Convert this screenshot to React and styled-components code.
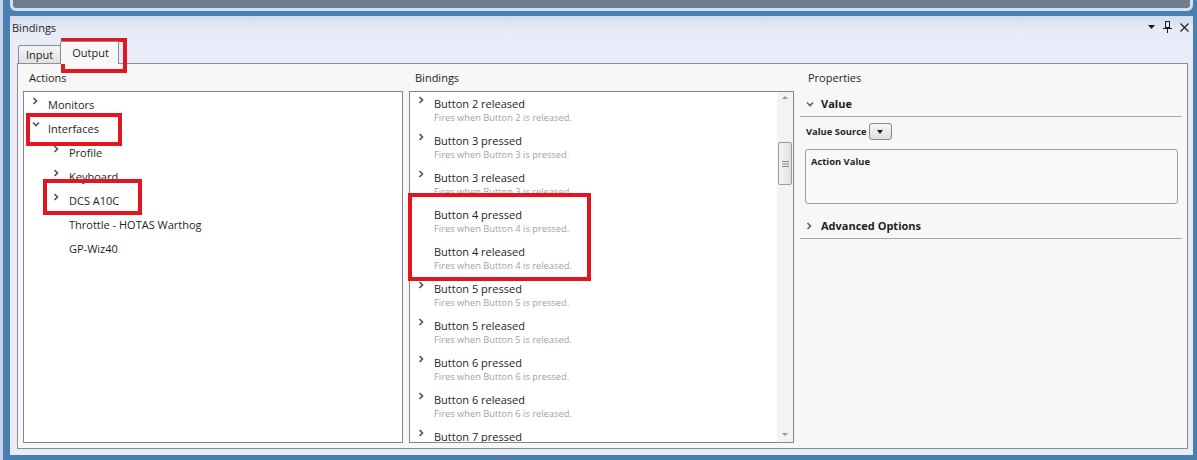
import React from 'react'
import styled, { createGlobalStyle } from 'styled-components'

const GlobalStyle = createGlobalStyle`
  html, body {
    margin: 0;
    padding: 0;
    background: #4a7fb2;
  }
  body {
    font-family: 'Open Sans', 'Liberation Sans', sans-serif;
    font-size: 11px;
    color: #1e1e1e;
  }
`;

const Frame = styled.div`
  position: relative;
  width: 1197px;
  height: 460px;
  box-sizing: border-box;
  display: flex;
  flex-direction: column;
  border-left: 3px solid #c6d3e4;
  padding: 0 4px 5px 7px;
  overflow: hidden;
`;

const TopWell = styled.div`
  height: 11px;
  margin-bottom: 5px;
  flex: none;
  box-sizing: border-box;
  background: #6e7e90;
  border: 3px solid #d4e0f0;
  border-top: none;
  border-radius: 0 0 6px 6px;
`;

const Panel = styled.div`
  flex: 1;
  display: flex;
  flex-direction: column;
  background: #e9ecf8;
  min-height: 0;
`;

const PanelHeader = styled.div`
  height: 22px;
  flex: none;
  display: flex;
  align-items: center;
  padding: 0 4px 0 2px;
  background: linear-gradient(#d3dcec, #e6eaf7 60%, #e9ecf8);
`;

const PanelTitle = styled.div`
  flex: 1;
`;

const HeaderIcons = styled.div`
  display: flex;
  align-items: center;
  gap: 8px;
`;

const TabArea = styled.div`
  flex: 1;
  display: flex;
  flex-direction: column;
  padding: 4px 5px 6px 7px;
  min-height: 0;
`;

const TabRow = styled.div`
  display: flex;
  align-items: flex-end;
  height: 22px;
  padding-left: 1px;
  flex: none;
`;

const Tab = styled.div`
  box-sizing: border-box;
  height: ${p => (p.active ? '23px' : '19px')};
  padding: ${p => (p.active ? '3px 9px 0 11px' : '1px 7px 0 7px')};
  border: 1px solid #8c8e94;
  border-bottom: ${p => (p.active ? 'none' : '1px solid #8c8e94')};
  border-radius: 2px 2px 0 0;
  background: ${p => (p.active ? '#f7f7f7' : 'linear-gradient(#f3f3f3, #e2e2e2)')};
  margin-left: ${p => (p.active ? '-1px' : '0')};
  position: relative;
  z-index: ${p => (p.active ? 2 : 1)};
  line-height: 15px;
`;

const TabBody = styled.div`
  flex: 1;
  margin-top: -1px;
  border: 1px solid #8c8e94;
  background: #f7f7f7;
  padding: 0 5px 5px 5px;
  display: grid;
  grid-template-columns: 380px 385px 1fr;
  column-gap: 6px;
  min-height: 0;
`;

const Column = styled.div`
  display: flex;
  flex-direction: column;
  min-height: 0;
`;

const ColumnHeader = styled.div`
  height: 27px;
  flex: none;
  box-sizing: border-box;
  padding: 6px 0 0 ${p => p.indent || 6}px;
  line-height: 16px;
`;

const ListBox = styled.div`
  flex: 1;
  display: flex;
  border: 1px solid #828790;
  background: #ffffff;
  overflow: hidden;
  min-height: 0;
`;

const ListItems = styled.div`
  flex: 1;
  overflow: hidden;
`;

const TreeRow = styled.div`
  height: 24px;
  display: flex;
  align-items: center;
  padding-left: ${p => 8 + p.level * 21}px;
`;

const ChevronSlot = styled.span`
  width: 16px;
  height: 14px;
  flex: none;
  display: flex;
  align-items: flex-start;
  justify-content: flex-start;
`;

const BindingItem = styled.div`
  height: 37px;
  box-sizing: border-box;
  padding: 4px 0 0 8px;
  display: flex;
`;

const BindingText = styled.div`
  display: flex;
  flex-direction: column;
`;

const BindingTitle = styled.div`
  line-height: 15px;
`;

const BindingDesc = styled.div`
  font-size: 9.3px;
  line-height: 13px;
  color: #a2a2a2;
`;

const ScrollTrack = styled.div`
  width: 16px;
  flex: none;
  background: #f3f3f3;
  display: flex;
  flex-direction: column;
  align-items: center;
  padding-top: 4px;
  box-sizing: border-box;
`;

const ScrollThumb = styled.div`
  width: 14px;
  height: 43px;
  margin-top: 43px;
  box-sizing: border-box;
  border: 1px solid #9b9b9b;
  border-radius: 2px;
  background: linear-gradient(90deg, #f4f4f4, #e2e2e2);
  display: flex;
  align-items: center;
  justify-content: center;
`;

const Spacer = styled.div`
  flex: 1;
`;

const ScrollDown = styled.div`
  margin-bottom: 6px;
  display: flex;
`;

const SectionHeader = styled.div`
  height: 26px;
  box-sizing: border-box;
  display: flex;
  align-items: center;
  padding-left: 6px;
  border-bottom: 1px solid #a9a9a9;
  font-weight: 700;
  margin-top: ${p => p.gap || 0}px;
`;

const SectionChevron = styled.span`
  width: 15px;
  display: flex;
  align-items: center;
`;

const FieldRow = styled.div`
  display: flex;
  align-items: center;
  margin-top: 6px;
  padding-left: 6px;
  height: 17px;
`;

const FieldLabel = styled.span`
  font-size: 9.4px;
  font-weight: 700;
  margin-right: 2px;
`;

const DropButton = styled.div`
  width: 23px;
  height: 17px;
  box-sizing: border-box;
  border: 1px solid #8a8a8a;
  border-radius: 3px;
  background: linear-gradient(#f6f6f6, #dedede);
  display: flex;
  align-items: center;
  justify-content: center;
`;

const ValueBox = styled.div`
  margin: 9px 4px 0 5px;
  height: 55px;
  box-sizing: border-box;
  border: 1px solid #9c9c9c;
  border-radius: 3px;
  padding: 5px 5px;
  font-size: 9.4px;
  font-weight: 700;
  background: #f8f8f8;
`;

const Highlight = styled.div`
  position: absolute;
  box-sizing: border-box;
  border: 4px solid #e3161f;
  pointer-events: none;
`;

const Chevron = ({ open, color = '#505050' }) =>
  open ? (
    <svg width="8" height="6" viewBox="0 0 8 6">
      <path d="M1 1.5 L4 4.5 L7 1.5" fill="none" stroke={color} strokeWidth="1.6" />
    </svg>
  ) : (
    <svg width="6" height="8" viewBox="0 0 6 8">
      <path d="M1.5 1 L4.5 4 L1.5 7" fill="none" stroke={color} strokeWidth="1.6" />
    </svg>
  );

const Triangle = ({ up, color = '#1a1a1a', w = 7, h = 4 }) => (
  <svg width={w} height={h} viewBox={`0 0 ${w} ${h}`}>
    <path d={up ? `M0 ${h} L${w / 2} 0 L${w} ${h} Z` : `M0 0 L${w} 0 L${w / 2} ${h} Z`} fill={color} />
  </svg>
);

const actions = [
  { label: 'Monitors', level: 0, chevron: 'closed' },
  { label: 'Interfaces', level: 0, chevron: 'open' },
  { label: 'Profile', level: 1, chevron: 'closed' },
  { label: 'Keyboard', level: 1, chevron: 'closed' },
  { label: 'DCS A10C', level: 1, chevron: 'closed' },
  { label: 'Throttle - HOTAS Warthog', level: 1 },
  { label: 'GP-Wiz40', level: 1 },
];

const bindings = [
  ['Button 2 released', 'Fires when Button 2 is released.', true],
  ['Button 3 pressed', 'Fires when Button 3 is pressed.', true],
  ['Button 3 released', 'Fires when Button 3 is released.', true],
  ['Button 4 pressed', 'Fires when Button 4 is pressed.', false],
  ['Button 4 released', 'Fires when Button 4 is released.', false],
  ['Button 5 pressed', 'Fires when Button 5 is pressed.', true],
  ['Button 5 released', 'Fires when Button 5 is released.', true],
  ['Button 6 pressed', 'Fires when Button 6 is pressed.', true],
  ['Button 6 released', 'Fires when Button 6 is released.', true],
  ['Button 7 pressed', 'Fires when Button 7 is pressed.', true],
];

const highlights = [
  { left: 58, top: 38, width: 66, height: 35 },
  { left: 23, top: 113, width: 96, height: 33 },
  { left: 40, top: 179, width: 99, height: 36 },
  { left: 405, top: 193, width: 183, height: 88 },
];

export default function App() {
  return (
    <>
      <GlobalStyle />
      <Frame>
        <TopWell />
        <Panel>
          <PanelHeader>
            <PanelTitle>Bindings</PanelTitle>
            <HeaderIcons>
              <Triangle w={7} h={4} />
              <svg width="9" height="12" viewBox="0 0 9 12">
                <rect x="2.5" y="0.5" width="4" height="6" fill="none" stroke="#1a1a1a" />
                <path d="M0 7.5 H9 M4.5 7.5 V12" stroke="#1a1a1a" strokeWidth="1" />
              </svg>
              <svg width="9" height="9" viewBox="0 0 9 9">
                <path d="M0.5 0.5 L8.5 8.5 M8.5 0.5 L0.5 8.5" stroke="#1a1a1a" strokeWidth="1.1" />
              </svg>
            </HeaderIcons>
          </PanelHeader>

          <TabArea>
            <TabRow>
              <Tab>Input</Tab>
              <Tab active>Output</Tab>
            </TabRow>

            <TabBody>
              <Column>
                <ColumnHeader>Actions</ColumnHeader>
                <ListBox>
                  <ListItems>
                    {actions.map(a => (
                      <TreeRow key={a.label} level={a.level}>
                        <ChevronSlot>
                          {a.chevron && <Chevron open={a.chevron === 'open'} />}
                        </ChevronSlot>
                        <span>{a.label}</span>
                      </TreeRow>
                    ))}
                  </ListItems>
                </ListBox>
              </Column>

              <Column>
                <ColumnHeader>Bindings</ColumnHeader>
                <ListBox>
                  <ListItems>
                    {bindings.map(([title, desc, hasChevron]) => (
                      <BindingItem key={title}>
                        <ChevronSlot>{hasChevron && <Chevron />}</ChevronSlot>
                        <BindingText>
                          <BindingTitle>{title}</BindingTitle>
                          <BindingDesc>{desc}</BindingDesc>
                        </BindingText>
                      </BindingItem>
                    ))}
                  </ListItems>
                  <ScrollTrack>
                    <Triangle up color="#9a9a9a" w={6} h={3} />
                    <ScrollThumb>
                      <svg width="7" height="6" viewBox="0 0 7 6">
                        <path d="M0 0.5 H7 M0 3 H7 M0 5.5 H7" stroke="#8a8a8a" strokeWidth="1" />
                      </svg>
                    </ScrollThumb>
                    <Spacer />
                    <ScrollDown>
                      <Triangle color="#9a9a9a" w={6} h={3} />
                    </ScrollDown>
                  </ScrollTrack>
                </ListBox>
              </Column>

              <Column>
                <ColumnHeader indent={8}>Properties</ColumnHeader>
                <SectionHeader>
                  <SectionChevron>
                    <Chevron open color="#606060" />
                  </SectionChevron>
                  Value
                </SectionHeader>
                <FieldRow>
                  <FieldLabel>Value Source</FieldLabel>
                  <DropButton>
                    <Triangle w={6} h={4} />
                  </DropButton>
                </FieldRow>
                <ValueBox>Action Value</ValueBox>
                <SectionHeader gap={9}>
                  <SectionChevron>
                    <Chevron color="#606060" />
                  </SectionChevron>
                  Advanced Options
                </SectionHeader>
              </Column>
            </TabBody>
          </TabArea>
        </Panel>

        {highlights.map((h, i) => (
          <Highlight key={i} style={h} />
        ))}
      </Frame>
    </>
  )
}
